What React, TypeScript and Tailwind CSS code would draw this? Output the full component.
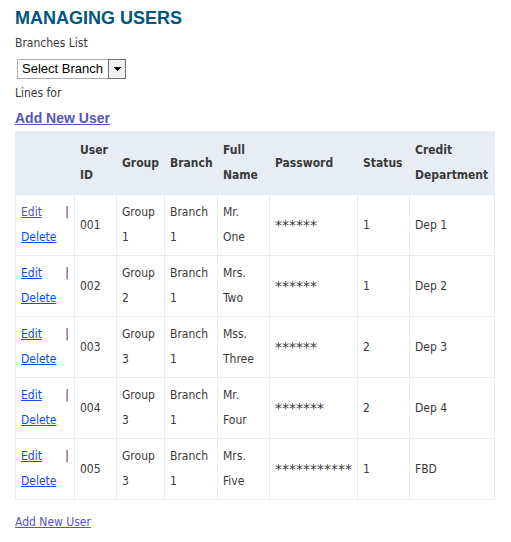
type User = {
  id: string;
  group: string;
  branch: string;
  name: string;
  password: string;
  status: string;
  department: string;
};

const users: User[] = [
  { id: '001', group: 'Group 1', branch: 'Branch 1', name: 'Mr. One', password: '******', status: '1', department: 'Dep 1' },
  { id: '002', group: 'Group 2', branch: 'Branch 1', name: 'Mrs. Two', password: '******', status: '1', department: 'Dep 2' },
  { id: '003', group: 'Group 3', branch: 'Branch 1', name: 'Mss. Three', password: '******', status: '2', department: 'Dep 3' },
  { id: '004', group: 'Group 3', branch: 'Branch 1', name: 'Mr. Four', password: '*******', status: '2', department: 'Dep 4' },
  { id: '005', group: 'Group 3', branch: 'Branch 1', name: 'Mrs. Five', password: '***********', status: '1', department: 'FBD' },
];

const columns = [
  { label: '', width: 'w-[59px]' },
  { label: 'User ID', width: 'w-[42px]' },
  { label: 'Group', width: 'w-[48px]' },
  { label: 'Branch', width: 'w-[53px]' },
  { label: 'Full Name', width: 'w-[52px]' },
  { label: 'Password', width: 'w-[88px]' },
  { label: 'Status', width: 'w-[52px]' },
  { label: 'Credit Department', width: 'w-[85px]' },
];

const cell = 'border border-[#e8edf4] px-[5px] py-[5px]';

export default function App() {
  return (
    <main className="min-h-screen bg-white pl-[15px] pr-4 pt-1.5 text-[12px] leading-[25px] text-[#3a3a3a] [font-family:'DejaVu_Sans_Condensed','Noto_Sans',sans-serif]">
      <h1 className="text-[18px] font-bold leading-[25px] text-[#005580] [font-family:'Liberation_Sans',sans-serif]">
        MANAGING USERS
      </h1>
      <label htmlFor="branch" className="block">Branches List</label>
      <div className="flex h-[25px] items-center px-0.5">
        <div className="relative h-5 w-[109px]">
          <select
            id="branch"
            className="block h-5 w-full appearance-none rounded-none border border-[#a5acb2] bg-white pl-1 text-[13px] leading-[18px] text-black [font-family:'Liberation_Sans',sans-serif]"
          >
            <option>Select Branch</option>
          </select>
          <span className="pointer-events-none absolute right-0 top-0 flex h-5 w-[18px] items-center justify-center border border-[#707070] bg-[#f0f0f0]">
            <svg width="7" height="4" viewBox="0 0 7 4" shapeRendering="crispEdges" aria-hidden="true">
              <path d="M0 0h7v1H6v1H5v1H4v1H3V3H2V2H1V1H0z" fill="#000" />
            </svg>
          </span>
        </div>
      </div>
      <p>Lines for</p>
      <p className="text-[14px] font-bold [font-family:'Liberation_Sans',sans-serif]">
        <a href="#new" className="text-[#5555bb] underline">Add New User</a>
      </p>
      <table className="w-full table-fixed border-collapse">
        <thead className="bg-[#e8edf4]">
          <tr>
            {columns.map((c) => (
              <th key={c.label} className={`border border-[#e8edf4] px-[5px] py-1.5 text-left font-bold ${c.width}`}>
                {c.label}
              </th>
            ))}
          </tr>
        </thead>
        <tbody>
          {users.map((u, i) => (
            <tr key={u.id}>
              <td className={cell}>
                <div className="flex justify-between">
                  <a href="#edit" className={`underline ${i === 0 ? 'text-[#5555bb]' : 'text-[#0a50f0]'}`}>Edit</a>
                  <span className="text-[#502050]">|</span>
                </div>
                <a href="#delete" className="block text-[#0a50f0] underline">Delete</a>
              </td>
              <td className={cell}>{u.id}</td>
              <td className={cell}>{u.group}</td>
              <td className={cell}>{u.branch}</td>
              <td className={cell}>{u.name}</td>
              <td className={`${cell} text-[14px] [font-family:'DejaVu_Sans',sans-serif]`}>{u.password}</td>
              <td className={cell}>{u.status}</td>
              <td className={cell}>{u.department}</td>
            </tr>
          ))}
        </tbody>
      </table>
      <p className="mt-2.5">
        <a href="#new" className="text-[#5555bb] underline">Add New User</a>
      </p>
    </main>
  );
}
